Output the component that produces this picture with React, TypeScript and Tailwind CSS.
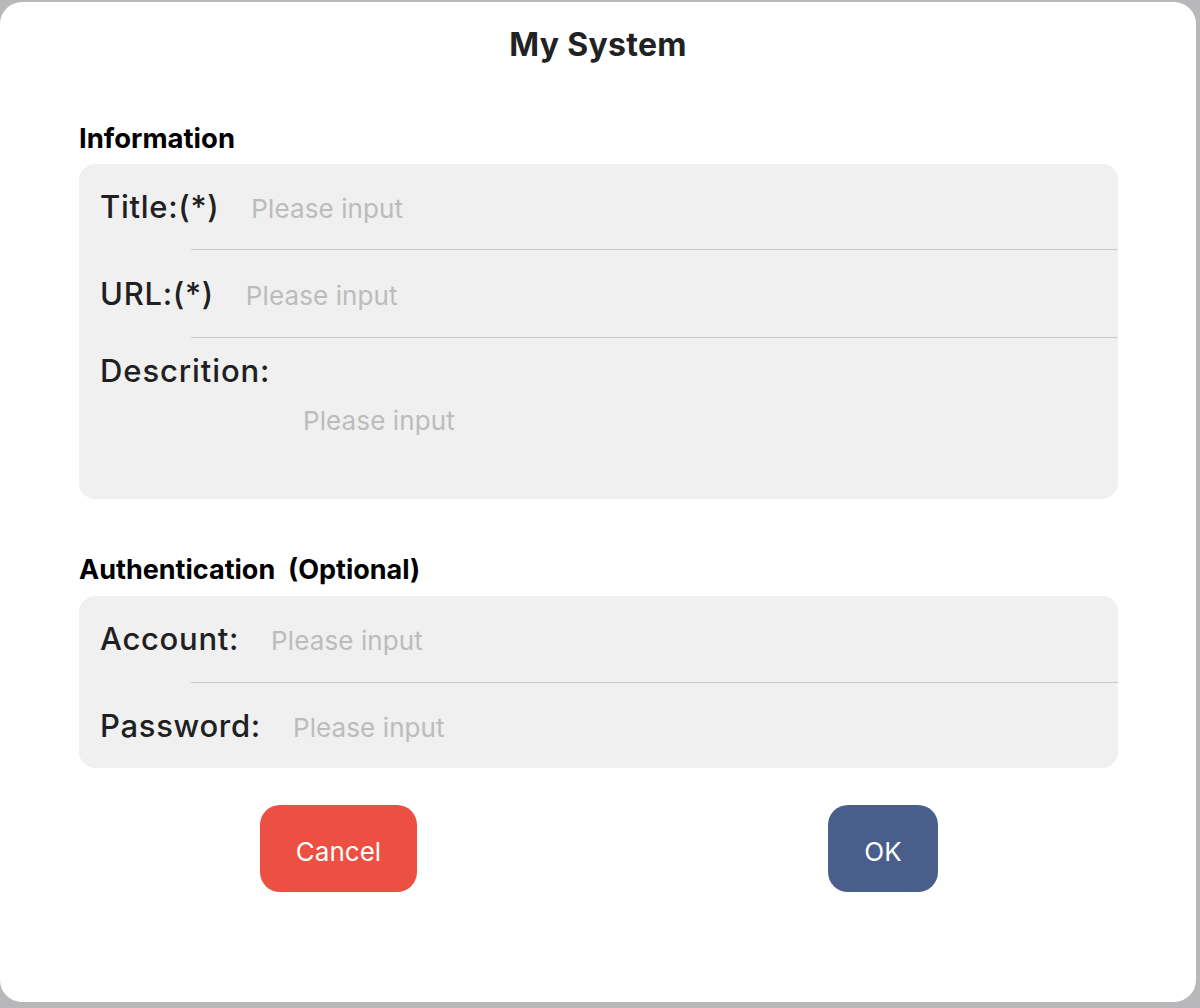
import React from "react";

const font = { fontFamily: "Inter, 'Noto Sans', sans-serif" };

function Row({ label, h }: { label: string; h: string }) {
  return (
    <div className={`flex items-center pl-[21px] ${h}`}>
      <span className="text-[31px] leading-[32px] font-medium text-[#202022] tracking-[0.7px]">{label}</span>
      <input
        className="ml-[32px] mt-[4px] flex-1 bg-transparent outline-none text-[26px] leading-[28px] tracking-[0.1px] text-[#222] placeholder:text-[#bcbcbc]"
        placeholder="Please input"
      />
    </div>
  );
}

function Divider() {
  return <div className="ml-[112px] h-px bg-[#c9c9c9]" />;
}

export default function App() {
  return (
    <div className="w-[1200px] h-[1008px] bg-[#b8b8bb] overflow-hidden" style={font}>
      <div className="mt-[2px] w-[1196px] h-[1000px] bg-white rounded-[22px] flex flex-col">
        <div className="h-[86px] flex items-center justify-center">
          <span className="text-[32px] leading-[32px] font-bold text-[#222224] tracking-[0.3px]">My System</span>
        </div>
        <div className="pl-[79px] w-[1118px] flex flex-col">
          <div className="h-[76px] flex items-end pb-[12px]">
            <span className="text-[27.5px] leading-[28px] font-bold text-black">Information</span>
          </div>
          <div className="bg-[#eff0ef] rounded-[16px] flex flex-col">
            <Row label="Title:(*)" h="h-[85px]" />
            <Divider />
            <Row label="URL:(*)" h="h-[87px]" />
            <Divider />
            <div className="h-[161px] pl-[21px] pt-[17px] flex flex-col">
              <span className="text-[31px] leading-[32px] font-medium text-[#202022] tracking-[0.9px]">Descrition:</span>
              <textarea
                className="mt-[20px] ml-[203px] h-[60px] resize-none bg-transparent outline-none text-[26px] leading-[28px] tracking-[0.1px] text-[#222] placeholder:text-[#bcbcbc]"
                placeholder="Please input"
              />
            </div>
          </div>
          <div className="h-[97px] flex items-end pb-[12px]">
            <span className="text-[27px] leading-[28px] font-bold text-black whitespace-pre">Authentication  (Optional)</span>
          </div>
          <div className="bg-[#eff0ef] rounded-[16px] flex flex-col">
            <Row label="Account:" h="h-[86px]" />
            <Divider />
            <Row label="Password:" h="h-[85px]" />
          </div>
          <div className="mt-[37px] flex">
            <button className="ml-[181px] w-[157px] h-[87px] pt-[5px] rounded-[20px] bg-[#eb5042] text-white text-[26px]">Cancel</button>
            <button className="ml-[411px] w-[110px] h-[87px] pt-[5px] rounded-[20px] bg-[#4a5e8b] text-white text-[26px]">OK</button>
          </div>
        </div>
      </div>
    </div>
  );
}
